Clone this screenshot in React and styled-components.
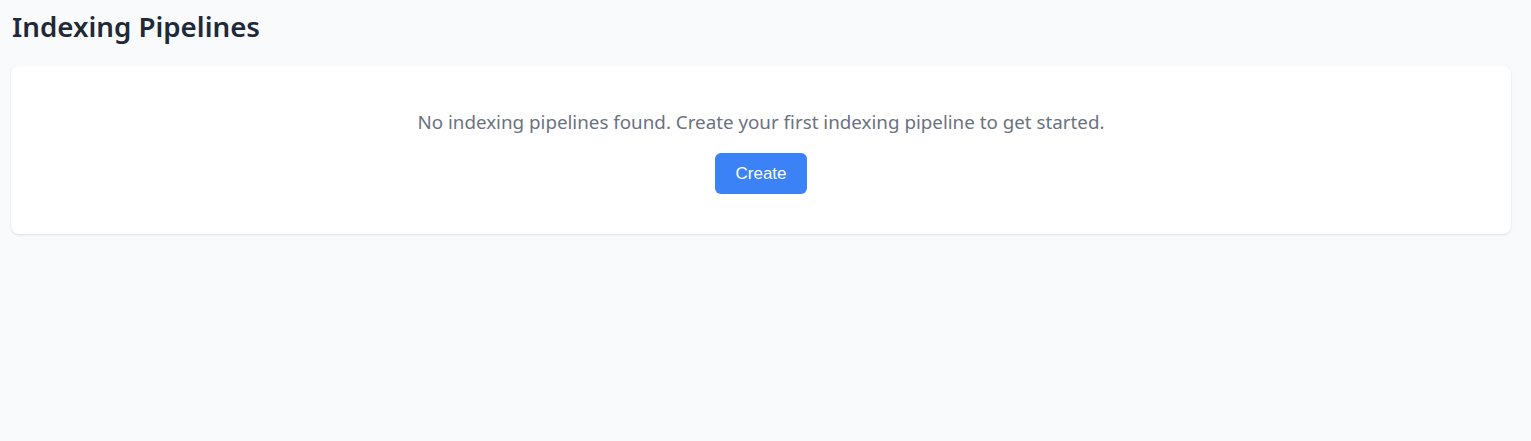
import React from "react";
import styled, { createGlobalStyle } from "styled-components";

const GlobalStyle = createGlobalStyle`
  html, body {
    margin: 0;
    padding: 0;
    background: #f9fafb;
    font-family: "Noto Sans", "Open Sans", sans-serif;
  }
`;

const Page = styled.div`
  padding: 6px 20px 0 11px;
  min-height: 441px;
  box-sizing: border-box;
`;

const Title = styled.h1`
  margin: 0 0 20px 1px;
  font-size: 27.7px;
  line-height: 40px;
  font-weight: 600;
  color: #1f2937;
`;

const Card = styled.div`
  background: #ffffff;
  border-radius: 8px;
  box-shadow: 0 1px 3px rgba(0, 0, 0, 0.08), 0 1px 2px rgba(0, 0, 0, 0.04);
  padding: 40px 24px;
  display: flex;
  flex-direction: column;
  align-items: center;
`;

const Message = styled.p`
  margin: 3px 0 17px;
  font-size: 18.8px;
  line-height: 27px;
  color: #6b7280;
`;

const Button = styled.button`
  height: 41px;
  padding: 0 20px;
  border: none;
  border-radius: 6px;
  background: #3b82f6;
  color: #ffffff;
  font-family: "Liberation Sans", Arial, sans-serif;
  font-size: 17px;
  cursor: pointer;
`;

export default function App() {
  return (
    <>
      <GlobalStyle />
      <Page>
        <Title>Indexing Pipelines</Title>
        <Card>
          <Message>
            No indexing pipelines found. Create your first indexing pipeline to get started.
          </Message>
          <Button>Create</Button>
        </Card>
      </Page>
    </>
  );
}
